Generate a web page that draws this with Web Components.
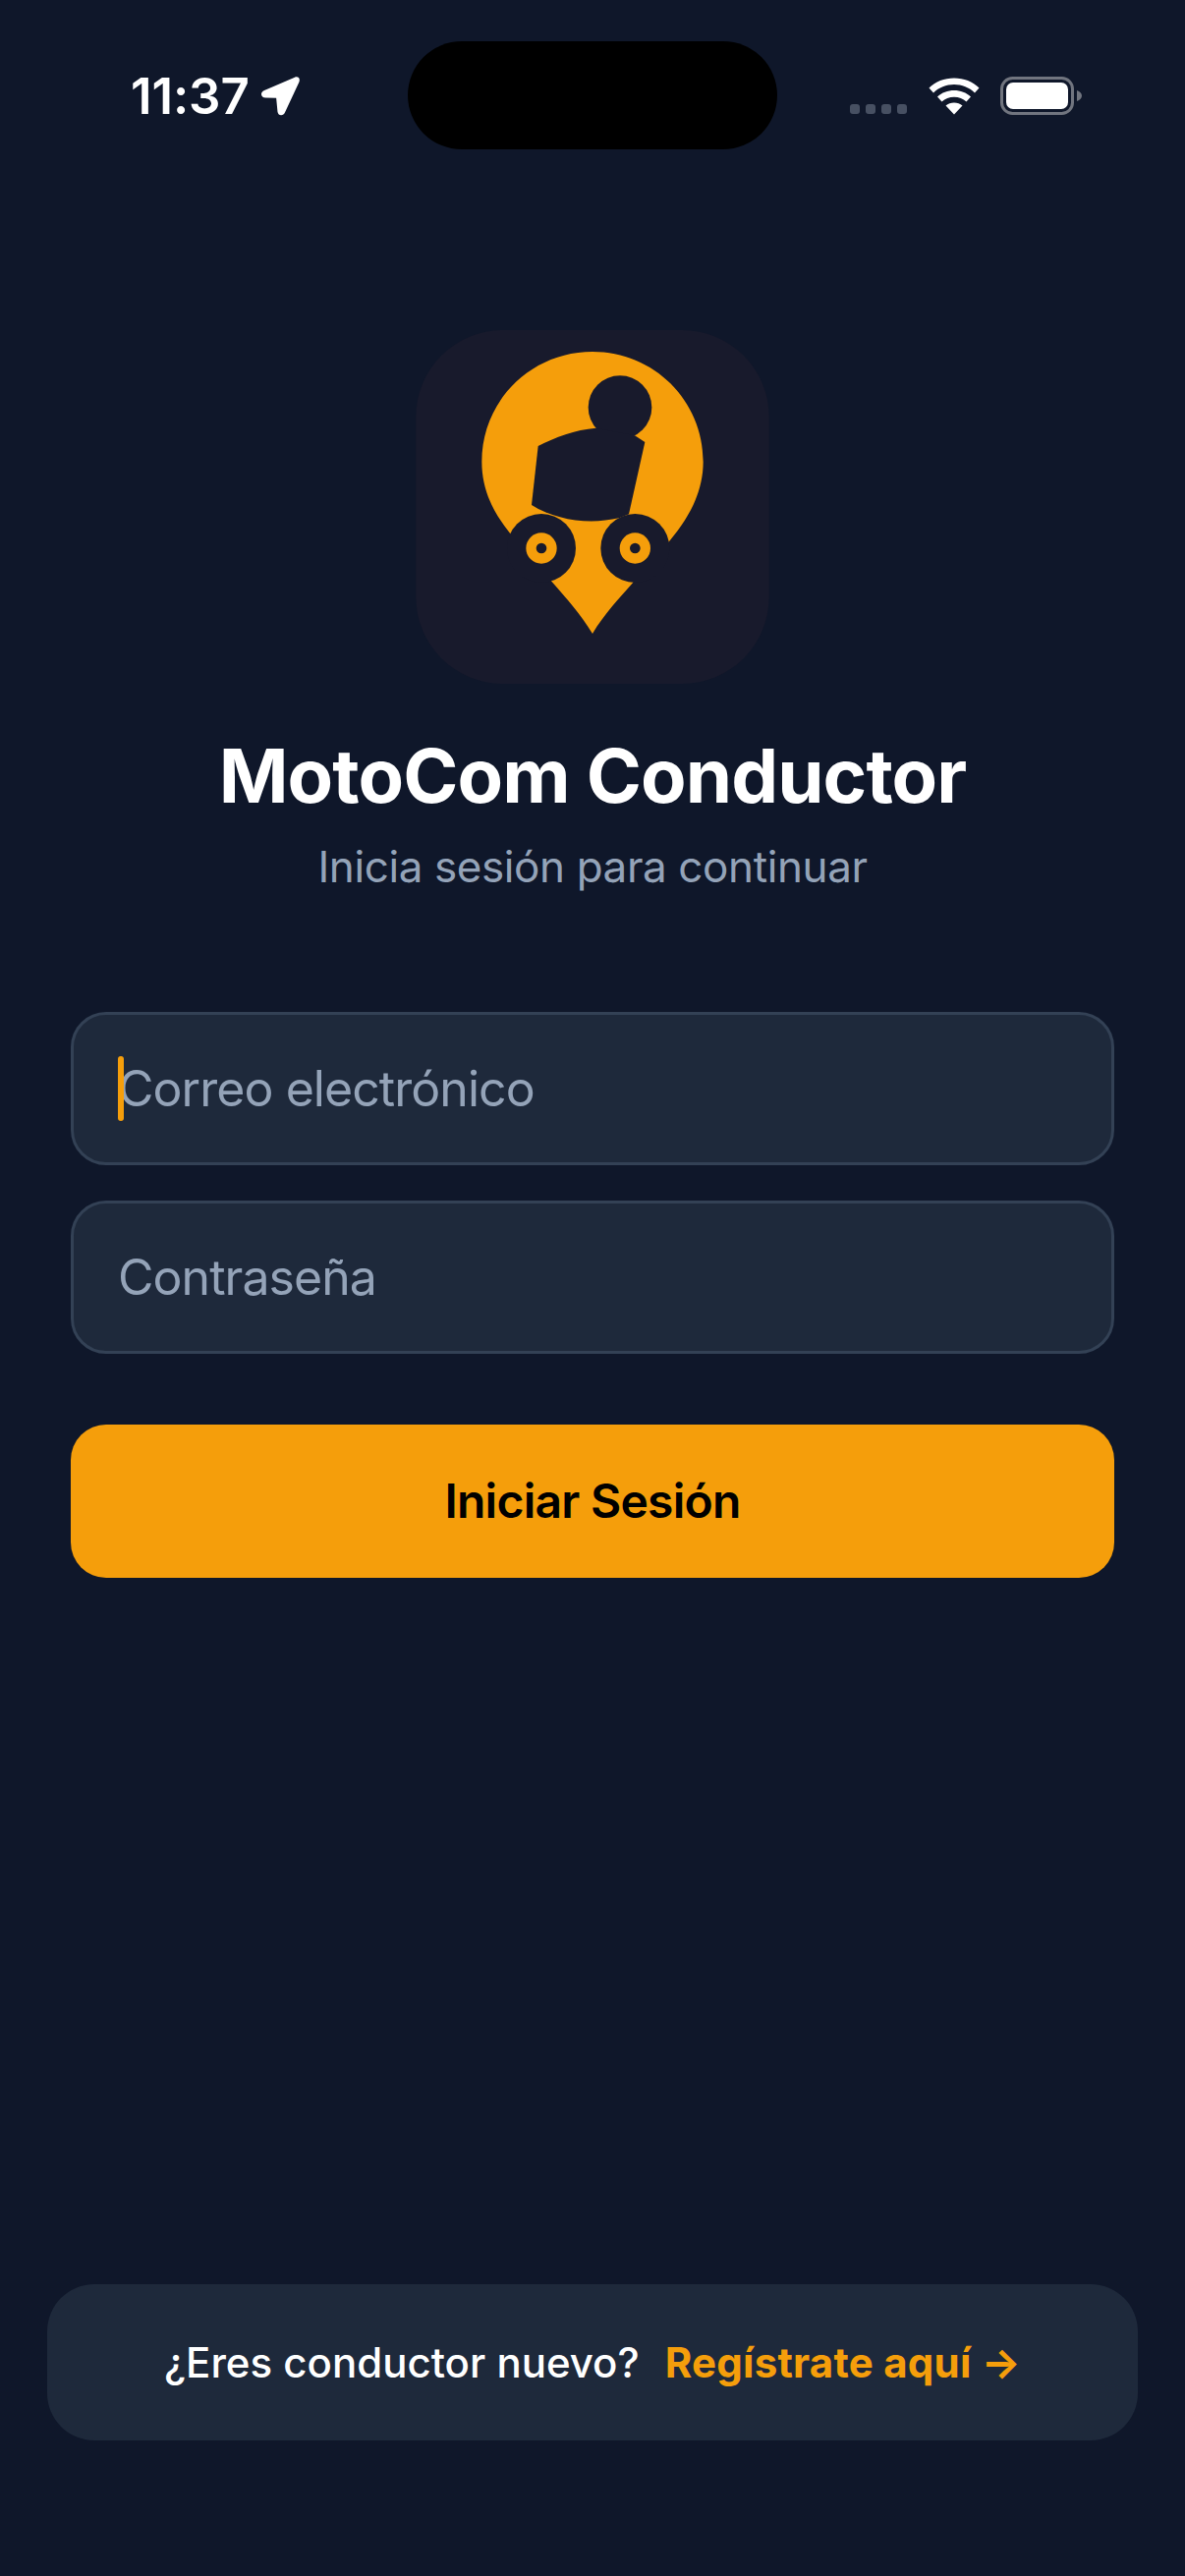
<!DOCTYPE html>
<html lang="es"><head><meta charset="utf-8"><title>MotoCom Conductor</title>
<style>html,body{margin:0;padding:0;background:#0f172a;font-family:Inter,"Liberation Sans",sans-serif}</style>
</head><body>
<app-screen>
  <status-bar slot="status"></status-bar>
  <app-logo></app-logo>
  <h-title>MotoCom Conductor</h-title>
  <h-sub>Inicia sesión para continuar</h-sub>
  <text-field focused>Correo electrónico</text-field>
  <text-field>Contraseña</text-field>
  <primary-button>Iniciar Sesión</primary-button>
  <signup-card slot="footer">¿Eres conductor nuevo?<span slot="link">Regístrate aquí →</span></signup-card>
</app-screen>
<script>
function def(name, html){
  customElements.define(name, class extends HTMLElement{
    constructor(){super();this.attachShadow({mode:'open'}).innerHTML=html;}
  });
}
const F='Inter,"Liberation Sans",sans-serif';
def('app-screen',`<style>
:host{display:flex;flex-direction:column;width:1206px;height:2622px;box-sizing:border-box;background:#0f172a;color:#fff;font-family:${F};overflow:hidden}
main{display:flex;flex-direction:column;align-items:stretch;padding:0 72px;margin-top:184px}
footer{margin-top:auto;padding:0 48px 138px}
</style><slot name="status"></slot><main><slot></slot></main><footer><slot name="footer"></slot></footer>`);
def('status-bar',`<style>
:host{display:flex;align-items:flex-start;height:152px;box-sizing:border-box}
.time{display:flex;align-items:center;gap:11px;margin:71px 0 0 133px;width:282px;box-sizing:border-box;height:54px;font:600 51px/54px ${F};color:#fff;letter-spacing:-.1px}
.time svg{width:41px;height:41px;flex:none;margin-top:-2px}
.island{width:376px;height:110px;margin-top:42px;border-radius:55px;background:#000;flex:none}
.right{display:flex;align-items:flex-start;margin-left:74px;margin-top:78px}
.dots{display:flex;gap:6px;margin-top:28px}
.dots i{width:10px;height:10px;border-radius:3px;background:#475062;display:block}
.wifi{width:52px;height:38px;margin-left:22px;margin-top:1px}
.bat{width:84px;height:40px;margin-left:21px}
</style>
<div class="time">11:37<svg viewBox="500 145 122 122"><path d="M604 150 512 190C498 196 501 212 516 212L548 213 552 254C554 268 570 268 575 255L617 165C622 153 614 146 604 150Z" fill="#fff"/></svg></div>
<div class="island"></div>
<div class="right">
<div class="dots"><i></i><i></i><i></i><i></i></div>
<svg class="wifi" viewBox="0 0 52 38"><g fill="#fff"><path d="M0.500 10.500C7 4 16 0.500 26 0.500s19 3.500 25.500 10l-4.500 5C41.500 10 34 7 26 7S10.500 10 5 15.500Z"/><path d="M9 19.500C13.500 15.300 19.500 13 26 13s12.500 2.300 17 6.500l-4.500 5C35.200 21.400 30.800 19.800 26 19.800s-9.200 1.600-12.500 4.700Z"/><path d="M17.500 28.500c2.300-2 5.300-3 8.500-3s6.200 1 8.500 3L26 37.500Z"/></g></svg>
<svg class="bat" viewBox="0 0 84 40"><rect x="1.500" y="1.500" width="72" height="36" rx="11" fill="none" stroke="#71757f" stroke-width="3"/><rect x="6" y="6" width="63" height="27" rx="7" fill="#fff"/><path d="M78 14c3 1 5 3 5 5.500S81 24 78 25Z" fill="#71757f"/></svg>
</div>`);
def('app-logo',`<style>:host{display:block;width:360px;height:360px;align-self:center}svg{display:block;width:100%;height:100%}</style>
<svg viewBox="70 48 1078 1080">
<rect x="70" y="48" width="1078" height="1080" rx="265" fill="#181a2c"/>
<path d="M271 450C271 263 422 114 609 114S947 263 947 450C947 540 905 620 844 692L732 820C690 868 645 915 609 975C573 915 530 868 484 815L357 668C310 610 271 540 271 450Z" fill="#f59e0b"/>
<g fill="#181a2c">
<circle cx="693" cy="284" r="97"/>
<path d="M443 402C495 375 555 352 620 347L738 370 769 390 720 610 690 622C600 642 500 630 423 582Z"/>
<circle cx="453" cy="714" r="105"/><circle cx="739" cy="714" r="105"/>
</g>
<circle cx="453" cy="714" r="47" fill="#f59e0b"/><circle cx="739" cy="714" r="47" fill="#f59e0b"/>
<circle cx="453" cy="714" r="16" fill="#181a2c"/><circle cx="739" cy="714" r="16" fill="#181a2c"/>
</svg>`);
def('h-title',`<style>:host{display:block;margin-top:49px;text-align:center;font:700 76px/88px ${F};letter-spacing:-.9px;color:#fff}</style><slot></slot>`);
def('h-sub',`<style>:host{display:block;margin-top:23px;margin-bottom:122px;text-align:center;font:400 44px/52px ${F};letter-spacing:-.4px;color:#94a3b8}</style><slot></slot>`);
def('text-field',`<style>
:host{display:flex;align-items:center;height:156px;box-sizing:border-box;margin-bottom:36px;padding-left:45px;background:#1e293b;border:3px solid #334155;border-radius:36px;font:400 50px/60px ${F};letter-spacing:-.95px;color:#94a3b8;position:relative}
.caret{display:none;position:absolute;left:45px;top:42px;width:6px;height:66px;border-radius:3px;background:#f59e0b}
:host([focused]) .caret{display:block}
</style><span class="caret"></span><slot></slot>`);
def('primary-button',`<style>:host{display:flex;align-items:center;justify-content:center;height:156px;margin-top:36px;background:#f59e0b;border-radius:36px;color:#000;font:600 48px/60px ${F};letter-spacing:-.75px}</style><slot></slot>`);
def('signup-card',`<style>:host{display:flex;align-items:center;justify-content:center;gap:26px;height:159px;background:#1e293b;border-radius:48px;color:#fff;font:500 42px/52px ${F}}
.l{color:#f59e0b;font-weight:700;letter-spacing:.25px}</style><span><slot></slot></span><span class="l"><slot name="link"></slot></span>`);
</script>
</body></html>
